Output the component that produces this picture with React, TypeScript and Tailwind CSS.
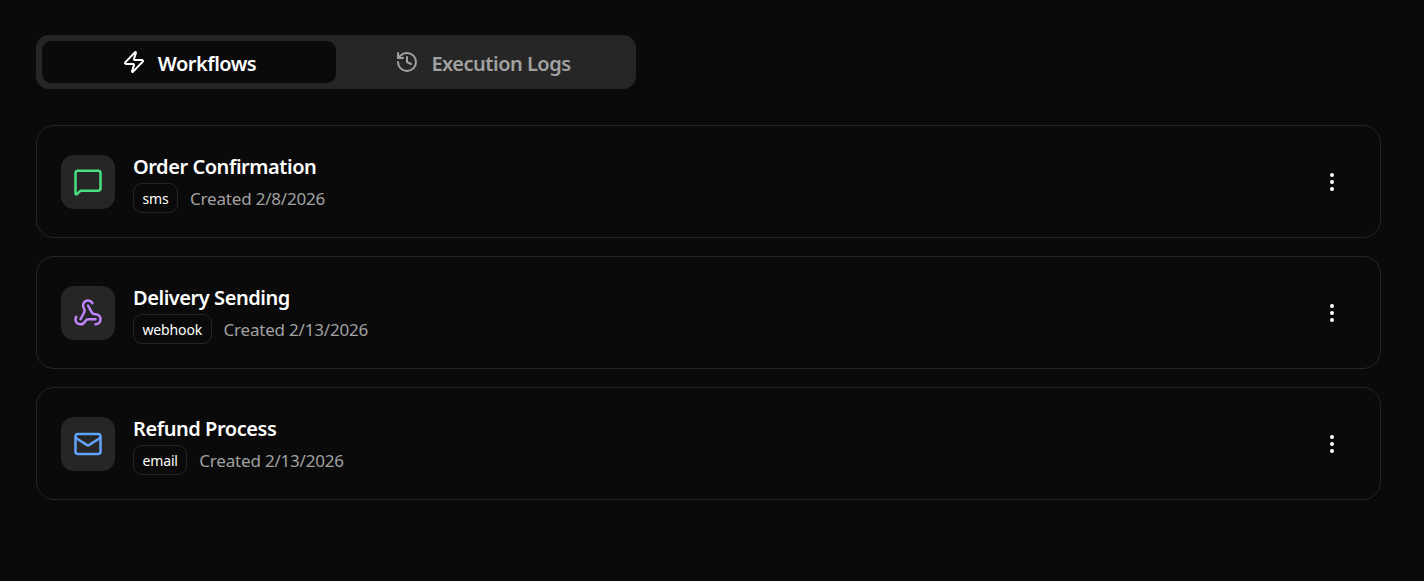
import React from 'react'
import { Zap, History, MessageSquare, Webhook, Mail, EllipsisVertical } from 'lucide-react'

const workflows = [
  { name: 'Order Confirmation', type: 'sms', created: '2/8/2026', icon: <MessageSquare className="w-[30px] h-[30px] text-[#4ade80]" /> },
  { name: 'Delivery Sending', type: 'webhook', created: '2/13/2026', icon: <Webhook className="w-[30px] h-[30px] text-[#c084fc]" /> },
  { name: 'Refund Process', type: 'email', created: '2/13/2026', icon: <Mail className="w-[30px] h-[30px] text-[#60a5fa]" /> },
]

export default function App() {
  return (
    <div className="min-h-[581px] bg-[#0a0a0a] px-9 pt-[35px] text-white font-['Noto_Sans',sans-serif]">
      {/* Tabs */}
      <div className="flex w-[600px] h-[54px] p-[6px] rounded-[13px] bg-[#262626]">
        <button className="flex-1 flex items-center justify-center gap-3 rounded-[9px] bg-[#0a0a0a] text-white text-[20px] font-semibold tracking-[-0.5px]">
          <Zap className="w-6 h-6" />
          <span className="pt-[3px]">Workflows</span>
        </button>
        <button className="flex-1 flex items-center justify-center gap-3 rounded-[9px] text-[#a1a1a1] text-[20px] font-semibold tracking-[-0.5px]">
          <History className="w-6 h-6" />
          <span className="pt-[3px]">Execution Logs</span>
        </button>
      </div>

      {/* Liste */}
      <div className="flex flex-col gap-[18px] mt-9 w-[1345px]">
        {workflows.map((w) => (
          <div key={w.name} className="flex items-center justify-between h-[113px] px-6 border border-[#262626] rounded-[18px] bg-[#0a0a0a]">
            <div className="flex items-center gap-[18px]">
              <div className="flex items-center justify-center w-[54px] h-[54px] rounded-[13px] bg-[#262626]">
                {w.icon}
              </div>
              <div className="flex flex-col gap-[2px] mt-[2px]">
                <h3 className="text-[20px] leading-[28px] font-semibold tracking-[-0.45px]">{w.name}</h3>
                <div className="flex items-center gap-3">
                  <span className="flex items-center h-[30px] px-[8.5px] pt-[2px] border border-[#262626] rounded-[9px] text-[14px] tracking-[-0.15px]">{w.type}</span>
                  <span className="pt-[2px] text-[#a1a1a1] text-[17px] tracking-[-0.2px]">Created {w.created}</span>
                </div>
              </div>
            </div>
            <button className="flex items-center justify-center w-9 h-9 mr-[6px]">
              <EllipsisVertical className="w-6 h-6" />
            </button>
          </div>
        ))}
      </div>
    </div>
  )
}
